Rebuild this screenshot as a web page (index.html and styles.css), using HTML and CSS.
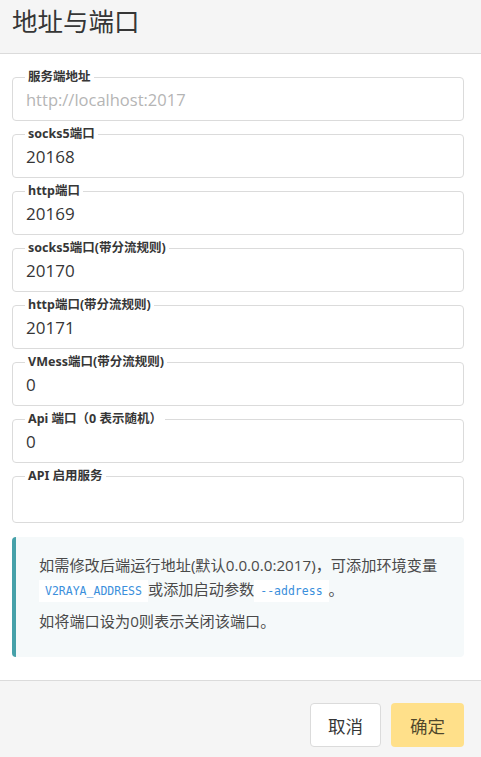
FILE: index.html
```html
<!DOCTYPE html>
<html lang="zh-CN">
<head>
<meta charset="utf-8">
<title>地址与端口</title>
<link rel="stylesheet" href="styles.css">
</head>
<body>
<div class="modal-card">
  <header class="card-head">
    <p class="card-title">地址与端口</p>
  </header>
  <section class="card-body">
    <div class="fields">
      <div class="field">
        <span class="legend">服务端地址</span>
        <span class="value placeholder">http://localhost:2017</span>
      </div>
      <div class="field">
        <span class="legend">socks5端口</span>
        <span class="value">20168</span>
      </div>
      <div class="field">
        <span class="legend">http端口</span>
        <span class="value">20169</span>
      </div>
      <div class="field">
        <span class="legend">socks5端口(带分流规则)</span>
        <span class="value">20170</span>
      </div>
      <div class="field">
        <span class="legend">http端口(带分流规则)</span>
        <span class="value">20171</span>
      </div>
      <div class="field">
        <span class="legend">VMess端口(带分流规则)</span>
        <span class="value">0</span>
      </div>
      <div class="field">
        <span class="legend">Api 端口（0 表示随机）</span>
        <span class="value">0</span>
      </div>
      <div class="field field-tall">
        <span class="legend">API 启用服务</span>
        <span class="value"></span>
      </div>
    </div>
    <div class="notice">
      <p>如需修改后端运行地址(默认0.0.0.0:2017)，可添加环境变量<code>V2RAYA_ADDRESS</code>或添加启动参数<code>--address</code>。</p>
      <p>如将端口设为0则表示关闭该端口。</p>
    </div>
  </section>
  <footer class="card-foot">
    <button class="btn">取消</button>
    <button class="btn btn-warning">确定</button>
  </footer>
</div>
</body>
</html>
```

FILE: styles.css
```css
* { box-sizing: border-box; }
html, body { margin: 0; padding: 0; }
body {
  width: 481px;
  height: 757px;
  overflow: hidden;
  font-family: "Open Sans", "Noto Sans CJK SC", sans-serif;
  color: #4a4a4a;
  background: #ffffff;
}
.modal-card {
  display: flex;
  flex-direction: column;
  height: 757px;
}
.card-head {
  background: #f5f5f5;
  height: 54px;
  border-bottom: 1px solid #dbdbdb;
  padding: 7px 12px 0;
}
.card-title {
  margin: 0;
  font-family: "Noto Sans CJK SC", sans-serif;
  font-size: 25.5px;
  line-height: 26px;
  color: #363636;
}
.card-body {
  flex: 1;
  padding: 23px 17px 0 12px;
}
.fields {
  display: flex;
  flex-direction: column;
  gap: 13px;
}
.field {
  position: relative;
  height: 44px;
  border: 1px solid #dbdbdb;
  border-radius: 4px;
  display: flex;
  align-items: center;
  padding: 0 13px;
}
.field-tall { height: 47px; }
.legend {
  position: absolute;
  top: -10px;
  left: 12px;
  padding: 0 3px;
  background: #ffffff;
  font-family: "Noto Sans", "Noto Sans CJK SC", sans-serif;
  font-size: 12.5px;
  line-height: 18px;
  font-weight: 700;
  color: #363636;
}
.value {
  font-size: 17px;
  color: #363636;
  padding-top: 1px;
}
.placeholder {
  color: #b5b5b5;
  font-size: 16.5px;
}
.notice {
  margin-top: 14px;
  height: 120px;
  background: #f5f9fa;
  border-left: 4px solid #46a1a9;
  border-radius: 4px;
  padding: 16px 18px 0 23px;
  font-size: 15.2px;
  line-height: 24px;
}
.notice p { margin: 0 0 6px; }
code {
  font-family: "DejaVu Sans Mono", monospace;
  font-size: 11.5px;
  color: #3b8fdc;
  background: #ffffff;
  padding: 4px 6px;
}
.card-foot {
  height: 77px;
  background: #f5f5f5;
  border-top: 1px solid #dbdbdb;
  display: flex;
  justify-content: flex-end;
  align-items: flex-start;
  gap: 10px;
  padding: 22px 17px 0 12px;
}
.btn {
  height: 44px;
  padding: 0 17px;
  border: 1px solid #dbdbdb;
  border-radius: 4px;
  background: #ffffff;
  font-family: "Noto Sans CJK SC", sans-serif;
  font-size: 17.5px;
  color: #363636;
}
.btn-warning {
  background: #ffe08a;
  border-color: transparent;
  color: rgba(0,0,0,0.7);
  padding: 0 18px;
}
```
